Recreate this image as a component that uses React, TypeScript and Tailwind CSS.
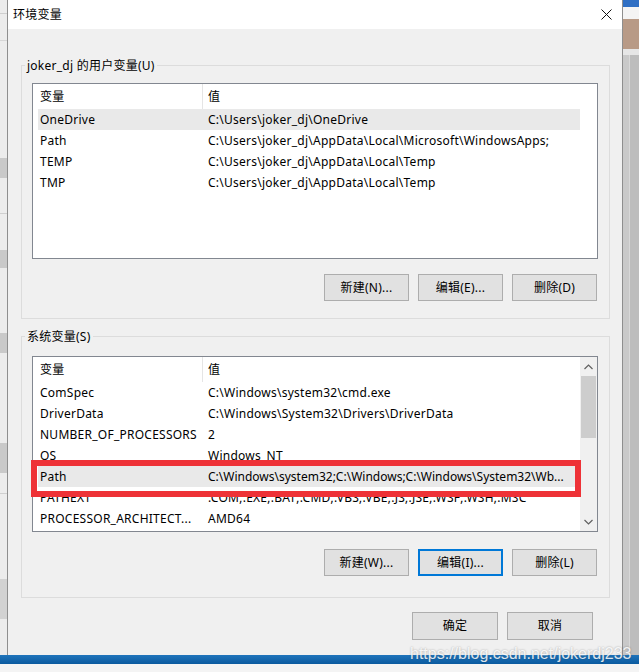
import React from "react";

type Row = { name: string; value: string; tight?: boolean };

const userRows: Row[] = [
  { name: "OneDrive", value: "C:\\Users\\joker_dj\\OneDrive" },
  { name: "Path", value: "C:\\Users\\joker_dj\\AppData\\Local\\Microsoft\\WindowsApps;" },
  { name: "TEMP", value: "C:\\Users\\joker_dj\\AppData\\Local\\Temp" },
  { name: "TMP", value: "C:\\Users\\joker_dj\\AppData\\Local\\Temp" },
];

const systemRows: Row[] = [
  { name: "ComSpec", value: "C:\\Windows\\system32\\cmd.exe" },
  { name: "DriverData", value: "C:\\Windows\\System32\\Drivers\\DriverData" },
  { name: "NUMBER_OF_PROCESSORS", value: "2" },
  { name: "OS", value: "Windows_NT" },
  { name: "Path", value: "C:\\Windows\\system32;C:\\Windows;C:\\Windows\\System32\\Wb...", tight: true },
  { name: "PATHEXT", value: ".COM;.EXE;.BAT;.CMD;.VBS;.VBE;.JS;.JSE;.WSF;.WSH;.MSC" },
  { name: "PROCESSOR_ARCHITECT...", value: "AMD64" },
];

const font = "font-['Noto_Sans','Noto_Sans_CJK_SC',sans-serif]";

const Chevron = ({ up }: { up?: boolean }) => (
  <svg width="9" height="6" viewBox="0 0 9 6" className="block">
    <path
      d={up ? "M0.5 5 L4.5 1 L8.5 5" : "M0.5 1 L4.5 5 L8.5 1"}
      fill="none"
      stroke="#606060"
      strokeWidth="1.2"
    />
  </svg>
);

const VarTable = ({
  rows,
  hovered,
  scroll,
  marked,
}: {
  rows: Row[];
  hovered: number;
  scroll?: boolean;
  marked?: boolean;
}) => (
  <div className="relative flex h-[176px] border border-[#828790] bg-white">
    <div className="flex w-[547px] flex-col overflow-hidden pl-[5px]">
      <div className="flex h-[25px] shrink-0 items-stretch">
        <div className="flex w-[164px] items-center pl-[2px]">变量</div>
        <div className="w-px bg-[#e5e5e5]" />
        <div className="flex flex-1 items-center pl-[5px]">值</div>
      </div>
      {rows.map((r, i) => (
        <div
          key={r.name}
          className={`flex h-[21px] shrink-0 items-center ${i === hovered ? "bg-[#e9e9e9]" : ""}`}
        >
          <div className="w-[165px] shrink-0 truncate pl-[2px]">{r.name}</div>
          <div className={`whitespace-nowrap pl-[5px] ${r.tight ? "tracking-normal" : ""}`}>{r.value}</div>
        </div>
      ))}
    </div>
    {scroll ? (
      <div className="flex w-[17px] flex-col items-center bg-[#f0f0f0]">
        <div className="flex h-[17px] w-full items-center justify-center pt-[2px]">
          <Chevron up />
        </div>
        <div className="mt-[2px] h-[62px] w-[15px] bg-[#cdcdcd]" />
        <div className="flex-1" />
        <div className="flex h-[17px] w-full items-center justify-center pb-[2px]">
          <Chevron />
        </div>
      </div>
    ) : (
      <div className="w-[17px]" />
    )}
    {marked && (
      <div className="absolute left-[-2px] top-[103px] h-[37px] w-[550px] border-[6px] border-[#ee3237]" />
    )}
  </div>
);

const Btn = ({
  label,
  focused,
  wide,
}: {
  label: string;
  focused?: boolean;
  wide?: boolean;
}) => (
  <div
    className={`flex items-center justify-center bg-[#e1e1e1] ${wide ? "h-[28px] w-[86px]" : "h-[27px] w-[85px]"} ${
      focused ? "border-2 border-[#0078d7]" : "border border-[#adadad]"
    }`}
  >
    {label}
  </div>
);

const Group = ({
  title,
  children,
  className,
}: {
  title: string;
  children: React.ReactNode;
  className?: string;
}) => (
  <fieldset className={`ml-[13px] mr-[12px] border border-[#dcdcdc] pl-[10px] pr-[11px] ${className ?? ""}`}>
    <legend className="ml-[-7px] h-[17px] px-[2px] leading-[17px]">{title}</legend>
    {children}
  </fieldset>
);

const LeftStrip = () => (
  <div className="flex w-[7px] flex-col bg-[#ececec]">
    <div className="h-[13px]" />
    <div className="h-px bg-[#cfcfcf]" />
    <div className="h-[26px]" />
    <div className="h-px bg-[#d6d6d6]" />
    <div className="h-[117px]" />
    <div className="h-[20px] bg-[#c9c9c9]" />
    <div className="h-[35px]" />
    <div className="h-px bg-[#cfcfcf]" />
    <div className="h-[36px]" />
    <div className="h-[18px] bg-[#c9c9c9]" />
    <div className="h-[65px]" />
    <div className="h-[20px] bg-[#c9c9c9]" />
    <div className="h-[90px]" />
    <div className="h-[30px] bg-[#c9c9c9]" />
    <div className="h-[20px]" />
    <div className="h-px bg-[#cfcfcf]" />
    <div className="h-[85px]" />
    <div className="h-[40px] bg-[#d2d2d2]" />
    <div className="flex-1" />
  </div>
);

const RightStrip = () => (
  <div className="flex w-[16px] flex-col bg-[#c2c2c2]">
    <div className="h-[7px] bg-[#2f6fc4]" />
    <div className="h-[12px] bg-[#f4f4f4]" />
    <div className="h-[30px] bg-[#b89a86]" />
    <div className="h-[6px] bg-[#e6e6e6]" />
    <div className="flex flex-1">
      <div className="w-[6px] bg-[#c9c9c9]" />
      <div className="w-px bg-[#d8d8d8]" />
      <div className="flex-1 bg-[#bdbdbd]" />
    </div>
  </div>
);

export default function App() {
  return (
    <div
      className={`relative flex h-[672px] w-[639px] flex-col overflow-hidden text-[12px] tracking-[0.25px] text-black ${font}`}
    >
      <div className="flex h-[655px]">
        <LeftStrip />
        <div className="flex w-[616px] flex-col border-x border-[#8e8e8e] bg-[#f0f0f0]">
          <div className="flex h-[29px] shrink-0 items-center justify-between bg-white pl-[5px] pr-[10px]">
            <span>环境变量</span>
            <svg width="11" height="11" viewBox="0 0 11 11">
              <path d="M0.5 0.5 L10.5 10.5 M10.5 0.5 L0.5 10.5" stroke="#111" strokeWidth="1" />
            </svg>
          </div>
          <div className="flex flex-col pt-[28px]">
            <Group title="joker_dj 的用户变量(U)">
              <div className="pt-[9px]">
                <VarTable rows={userRows} hovered={0} />
              </div>
              <div className="flex justify-end gap-[9px] pr-px pt-[15px] pb-[17px]">
                <Btn label="新建(N)..." />
                <Btn label="编辑(E)..." />
                <Btn label="删除(D)" />
              </div>
            </Group>
            <Group title="系统变量(S)" className="mt-[9px]">
              <div className="pt-[11px]">
                <VarTable rows={systemRows} hovered={4} scroll marked />
              </div>
              <div className="flex justify-end gap-[9px] pr-px pt-[17px] pb-[21px]">
                <Btn label="新建(W)..." />
                <Btn label="编辑(I)..." focused />
                <Btn label="删除(L)" />
              </div>
            </Group>
            <div className="flex justify-end gap-[9px] pr-[29px] pt-[14px]">
              <Btn label="确定" wide />
              <Btn label="取消" wide />
            </div>
          </div>
        </div>
        <RightStrip />
      </div>
      <div className="h-[9px] bg-gradient-to-b from-[#1f74bb] to-[#0a5a9f]" />
      <div className="flex-1 bg-[#f4f4f4]" />
      <div className="absolute left-[410px] top-[644px] whitespace-nowrap font-['Liberation_Sans',sans-serif] text-[16px] leading-[19px] tracking-normal text-white/85 [text-shadow:0_0_2px_rgba(0,0,0,0.35)]">
        https://blog.csdn.net/jokerdj233
      </div>
    </div>
  );
}
